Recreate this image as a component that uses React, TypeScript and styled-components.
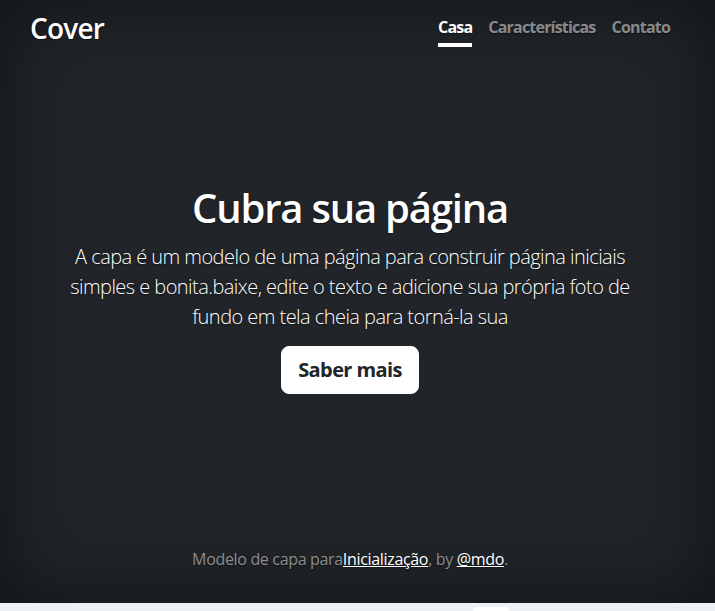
import React from "react";
import styled, { createGlobalStyle } from "styled-components";

const Global = createGlobalStyle`
  html, body { margin: 0; padding: 0; background: #eef1f3; }
  body {
    font-family: "Open Sans", "Noto Sans", sans-serif;
    color: #fff;
  }
  * { box-sizing: border-box; }
`;

const Page = styled.div`
  height: 603px;
  background: #212529;
  box-shadow: inset 0 0 5rem rgba(0, 0, 0, 0.5);
  text-shadow: 0 0.05rem 0.1rem rgba(0, 0, 0, 0.5);
  padding-right: 15px;
  display: flex;
`;

const Container = styled.div`
  width: 672px;
  max-width: 42em;
  margin: 0 auto;
  height: 100%;
  padding: 16px;
  display: flex;
  flex-direction: column;
`;

const Header = styled.header`
  display: flex;
  justify-content: space-between;
  align-items: flex-start;
`;

const Brand = styled.h3`
  margin: 0;
  font-size: 28px;
  font-weight: 600;
  line-height: 24px;
  letter-spacing: -0.8px;
`;

const Nav = styled.nav`
  display: flex;
  gap: 16px;
`;

const NavLink = styled.a<{ $active?: boolean }>`
  font-size: 16px;
  font-weight: 700;
  line-height: 23px;
  letter-spacing: -0.8px;
  padding: 0 0 4px;
  color: ${(p) => (p.$active ? "#fff" : "rgba(255,255,255,0.5)")};
  border-bottom: 4px solid ${(p) => (p.$active ? "#fff" : "transparent")};
  text-decoration: none;
`;

const Main = styled.main`
  margin: auto 0;
  text-align: center;
  padding-bottom: 16px;
`;

const Title = styled.h1`
  margin: 0 0 10px;
  font-size: 40px;
  font-weight: 600;
  line-height: 1.2;
  letter-spacing: -1.2px;
`;

const Lead = styled.p`
  margin: 0 0 14px;
  font-size: 20px;
  font-weight: 300;
  line-height: 1.5;
  letter-spacing: -0.55px;
`;

const Button = styled.a`
  display: inline-block;
  background: #fff;
  color: #212529;
  text-shadow: none;
  font-size: 20px;
  font-weight: 700;
  line-height: 30px;
  letter-spacing: -0.6px;
  padding: 8px 16px;
  border: 1px solid #fff;
  border-radius: 8px;
  text-decoration: none;
`;

const Footer = styled.footer`
  text-align: center;
  color: rgba(255, 255, 255, 0.5);
  font-size: 16px;
  line-height: 24px;
  letter-spacing: -0.33px;
  padding-bottom: 16px;
`;

const FootLink = styled.a`
  color: #fff;
  text-decoration: underline;
`;

const Strip = styled.div`
  height: 8px;
  background: #eef1f3;
  position: relative;
`;

const Pill = styled.div`
  position: absolute;
  left: 473px;
  top: 4px;
  width: 36px;
  height: 10px;
  background: #fff;
  border-radius: 4px;
`;

export default function App() {
  return (
    <>
      <Global />
      <Page>
        <Container>
          <Header>
            <Brand>Cover</Brand>
            <Nav>
              <NavLink $active href="#">Casa</NavLink>
              <NavLink href="#">Características</NavLink>
              <NavLink href="#">Contato</NavLink>
            </Nav>
          </Header>
          <Main>
            <Title>Cubra sua página</Title>
            <Lead>
              A capa é um modelo de uma página para construir página iniciais
              <br />
              simples e bonita.baixe, edite o texto e adicione sua própria foto de
              <br />
              fundo em tela cheia para torná-la sua
            </Lead>
            <Button href="#">Saber mais</Button>
          </Main>
          <Footer>
            Modelo de capa para<FootLink href="#">Inicialização</FootLink>, by{" "}
            <FootLink href="#">@mdo</FootLink>.
          </Footer>
        </Container>
      </Page>
      <Strip>
        <Pill />
      </Strip>
    </>
  );
}
